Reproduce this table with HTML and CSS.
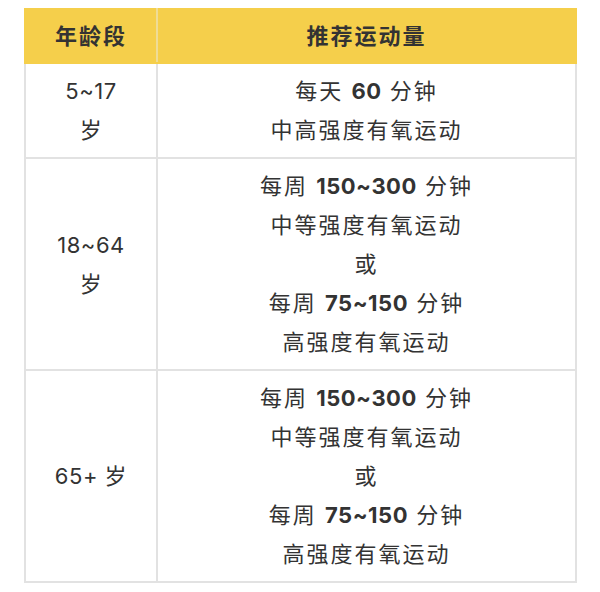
FILE: index.html
```html
<!DOCTYPE html>
<html lang="zh">
<head>
<meta charset="utf-8">
<link rel="stylesheet" href="styles.css">
</head>
<body>
<table class="plan">
  <thead>
    <tr><th class="age">年龄段</th><th>推荐运动量</th></tr>
  </thead>
  <tbody>
    <tr>
      <td class="age">5~17<br>岁</td>
      <td>每天 <b>60</b> 分钟<br>中高强度有氧运动</td>
    </tr>
    <tr>
      <td class="age">18~64<br>岁</td>
      <td>每周 <b>150~300</b> 分钟<br>中等强度有氧运动<br>或<br>每周 <b>75~150</b> 分钟<br>高强度有氧运动</td>
    </tr>
    <tr>
      <td class="age">65+ 岁</td>
      <td>每周 <b>150~300</b> 分钟<br>中等强度有氧运动<br>或<br>每周 <b>75~150</b> 分钟<br>高强度有氧运动</td>
    </tr>
  </tbody>
</table>
</body>
</html>
```
FILE: styles.css
```css
html, body {
  margin: 0;
  padding: 0;
  background: #ffffff;
}
body {
  padding: 8px 23px 0 24px;
  font-family: Inter, "Noto Sans CJK SC", sans-serif;
  color: #333333;
}
.plan {
  width: 553px;
  border-collapse: collapse;
  font-size: 22px;
  letter-spacing: 2px;
}
.plan th, .plan td {
  border: 2px solid #e2e2e2;
  text-align: center;
  vertical-align: middle;
}
.plan th {
  background: #f5cf4b;
  border-color: #f5cf4b;
  border-right-color: #efdc95;
  height: 52px;
  padding: 0;
  font-weight: 700;
  color: #333333;
  line-height: 30px;
}
.plan th:last-child { border-right-color: #f5cf4b; }
.plan td {
  padding: 8px 0 7px;
  line-height: 39px;
}
.plan .age {
  width: 130px;
  letter-spacing: 0.5px;
}
.plan th.age { letter-spacing: 2px; }
.plan b {
  font-weight: 700;
  letter-spacing: 0.5px;
}
```
